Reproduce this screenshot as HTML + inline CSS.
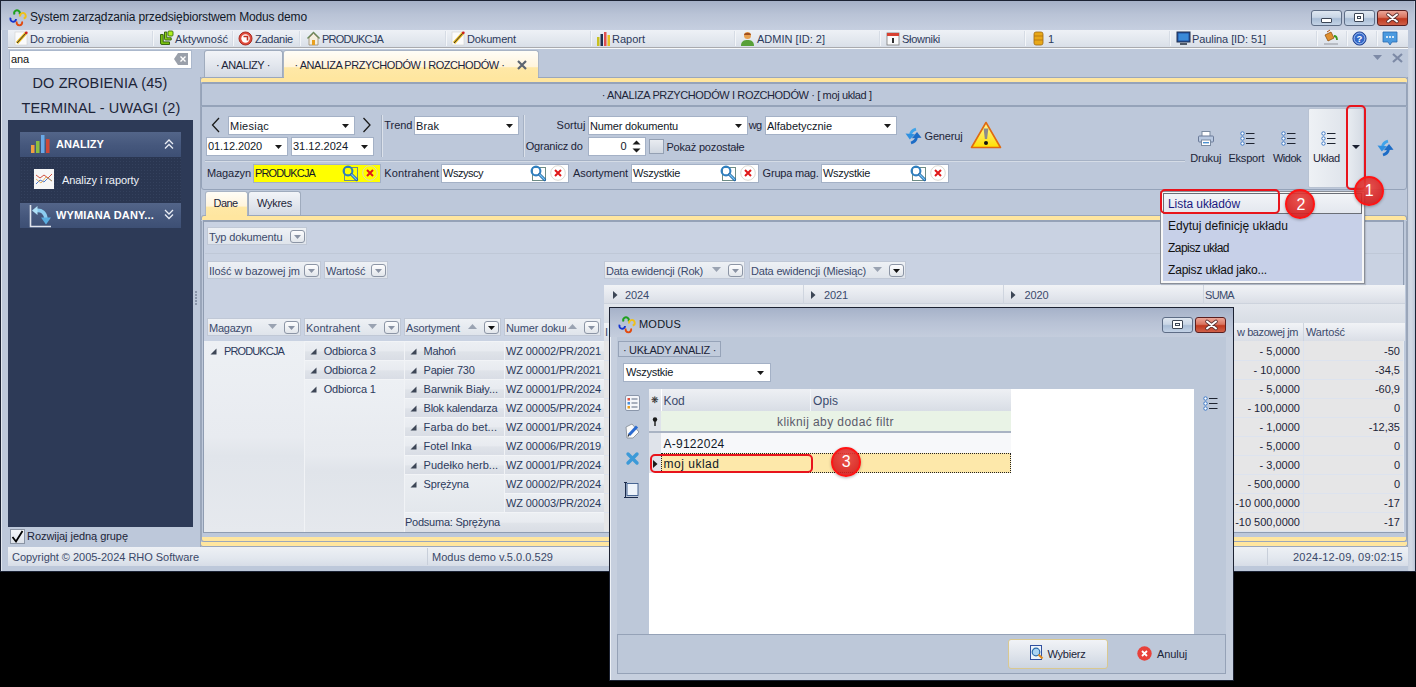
<!DOCTYPE html>
<html><head><meta charset="utf-8">
<style>
*{margin:0;padding:0;box-sizing:border-box}
html,body{width:1416px;height:687px;overflow:hidden;background:#000;font-family:"Liberation Sans",sans-serif;font-size:11px;color:#1f2b48}
.a{position:absolute}
.t{position:absolute;white-space:nowrap}
svg{position:absolute;overflow:visible}
</style></head><body>

<div class="a" style="left:0px;top:0px;width:1416px;height:572px;background:#bdc8da;border:1px solid #1b2233;"></div>
<div class="a" style="left:1px;top:1px;width:1413px;height:570px;border-left:1px solid #e2e7ef;border-top:1px solid #dfe5ee;"></div>
<div class="a" style="left:1px;top:1px;width:1413px;height:29px;background:linear-gradient(#a5b1c8,#b9c3d6 45%,#c6cfe0);"></div>
<svg style="left:6px;top:6px" width="24" height="24" viewBox="0 0 24 24"><path d="M8.6 8.6A2.8 2.8 0 1 1 13.4 8.6" stroke="#1ea01e" stroke-width="1.9" fill="none"/><path d="M14.2 10.5A2.8 2.8 0 1 1 17.7 12.5" stroke="#f0c018" stroke-width="1.9" fill="none"/><path d="M4.7 11.7A2.8 2.8 0 1 0 10 13" stroke="#1434d0" stroke-width="1.9" fill="none"/><path d="M10.8 15.5A2.8 2.8 0 1 0 16 15.5" stroke="#e24a10" stroke-width="1.9" fill="none"/></svg>
<span class="t" style="left:30px;top:10.84px;font-size:12px;line-height:12px;letter-spacing:-0.152px;color:#111827;">System zarządzania przedsiębiorstwem Modus demo</span>
<div class="a" style="left:1311px;top:10px;width:31px;height:16px;background:linear-gradient(#dfe7f1,#c9d6e6 45%,#a9bdd6 55%,#c4d3e6);border:1px solid #5e6d86;border-radius:3px;"></div>
<div class="a" style="left:1344px;top:10px;width:31px;height:16px;background:linear-gradient(#dfe7f1,#c9d6e6 45%,#a9bdd6 55%,#c4d3e6);border:1px solid #5e6d86;border-radius:3px;"></div>
<div class="a" style="left:1377px;top:10px;width:31px;height:16px;background:linear-gradient(#eba597,#d9745f 45%,#c0391f 55%,#d06048);border:1px solid #5a1f1f;border-radius:3px;"></div>
<div class="a" style="left:1321px;top:18px;width:11px;height:5px;background:#fff;border:1px solid #3c4656;border-radius:1px;"></div>
<div class="a" style="left:1354px;top:13px;width:10px;height:9px;background:#fff;border:1px solid #3c4656;border-radius:1px;"><div class="a" style="left:2px;top:2px;width:4px;height:3px;border:1px solid #3c4656"></div></div>
<svg style="left:1386px;top:13px" width="13" height="10" viewBox="0 0 13 10"><path d="M2 1.5L11 8.5M11 1.5L2 8.5" stroke="#5a3030" stroke-width="3.6" stroke-linecap="round"/><path d="M2 1.5L11 8.5M11 1.5L2 8.5" stroke="#fff" stroke-width="2" stroke-linecap="round"/></svg>
<div class="a" style="left:8px;top:30px;width:1400px;height:17px;background:linear-gradient(#eef1f6,#e2e7ee 60%,#d9dfe8);"></div>
<div class="a" style="left:8px;top:47px;width:1400px;height:1px;background:#a9aaae;"></div>
<div class="a" style="left:8px;top:48px;width:1400px;height:1px;background:#f7f9fb;"></div>
<div class="a" style="left:152px;top:31px;width:2px;height:15px;border-left:1px solid #d6dce5;border-right:1px solid #f4f6f9;"></div>
<div class="a" style="left:232px;top:31px;width:2px;height:15px;border-left:1px solid #d6dce5;border-right:1px solid #f4f6f9;"></div>
<div class="a" style="left:299px;top:31px;width:2px;height:15px;border-left:1px solid #d6dce5;border-right:1px solid #f4f6f9;"></div>
<div class="a" style="left:445px;top:31px;width:2px;height:15px;border-left:1px solid #d6dce5;border-right:1px solid #f4f6f9;"></div>
<div class="a" style="left:590px;top:31px;width:2px;height:15px;border-left:1px solid #d6dce5;border-right:1px solid #f4f6f9;"></div>
<div class="a" style="left:734px;top:31px;width:2px;height:15px;border-left:1px solid #d6dce5;border-right:1px solid #f4f6f9;"></div>
<div class="a" style="left:879px;top:31px;width:2px;height:15px;border-left:1px solid #d6dce5;border-right:1px solid #f4f6f9;"></div>
<div class="a" style="left:1024px;top:31px;width:2px;height:15px;border-left:1px solid #d6dce5;border-right:1px solid #f4f6f9;"></div>
<div class="a" style="left:1169px;top:31px;width:2px;height:15px;border-left:1px solid #d6dce5;border-right:1px solid #f4f6f9;"></div>
<div class="a" style="left:1316px;top:31px;width:2px;height:15px;border-left:1px solid #d6dce5;border-right:1px solid #f4f6f9;"></div>
<div class="a" style="left:1346px;top:31px;width:2px;height:15px;border-left:1px solid #d6dce5;border-right:1px solid #f4f6f9;"></div>
<div class="a" style="left:1376px;top:31px;width:2px;height:15px;border-left:1px solid #d6dce5;border-right:1px solid #f4f6f9;"></div>
<span class="t" style="left:30px;top:33.69px;font-size:11px;line-height:11px;letter-spacing:-0.230px;color:#2c3a5c;">Do zrobienia</span>
<span class="t" style="left:175px;top:33.69px;font-size:11px;line-height:11px;letter-spacing:0.047px;color:#2c3a5c;">Aktywność</span>
<span class="t" style="left:255px;top:33.69px;font-size:11px;line-height:11px;letter-spacing:-0.252px;color:#2c3a5c;">Zadanie</span>
<span class="t" style="left:322px;top:33.69px;font-size:11px;line-height:11px;letter-spacing:-0.760px;color:#2c3a5c;">PRODUKCJA</span>
<span class="t" style="left:467px;top:33.69px;font-size:11px;line-height:11px;letter-spacing:-0.143px;color:#2c3a5c;">Dokument</span>
<span class="t" style="left:612px;top:33.69px;font-size:11px;line-height:11px;letter-spacing:-0.005px;color:#2c3a5c;">Raport</span>
<span class="t" style="left:757px;top:33.69px;font-size:11px;line-height:11px;letter-spacing:0.012px;color:#2c3a5c;">ADMIN [ID: 2]</span>
<span class="t" style="left:902px;top:33.69px;font-size:11px;line-height:11px;letter-spacing:-0.295px;color:#2c3a5c;">Słowniki</span>
<span class="t" style="left:1048px;top:33.69px;font-size:11px;line-height:11px;letter-spacing:-1.125px;color:#2c3a5c;">1</span>
<span class="t" style="left:1192px;top:33.69px;font-size:11px;line-height:11px;letter-spacing:-0.076px;color:#2c3a5c;">Paulina [ID: 51]</span>
<svg style="left:14px;top:31px" width="15" height="15" viewBox="0 0 15 15"><rect x="1" y="1" width="12" height="13" fill="#fbfbfb" stroke="#d0d0d0" stroke-width="0.6"/><path d="M3 12L12 2" stroke="#e8b820" stroke-width="3"/><path d="M3 12L12 2" stroke="#303030" stroke-width="1"/><circle cx="12.3" cy="1.8" r="1.4" fill="#d02020"/></svg>
<svg style="left:158px;top:30px" width="16" height="16" viewBox="0 0 16 16"><path d="M2.5 4.5v8.5a1.5 1.5 0 0 0 1.5 1.5h7.5v-2.6H5.2V4.5z" fill="#78c010" stroke="#2f5a08" stroke-width="0.9"/><path d="M6.5 2v6.8a1.2 1.2 0 0 0 1.2 1.2h5.5V7.8H8.8V2z" fill="#8ad018" stroke="#2f5a08" stroke-width="0.9"/><rect x="10" y="1" width="5" height="5" rx="1" fill="#b0f020" stroke="#3a7010" stroke-width="0.9"/></svg>
<svg style="left:238px;top:31px" width="15" height="15" viewBox="0 0 15 15"><circle cx="7.5" cy="7.5" r="6.5" fill="#e04a3a" stroke="#a82a20"/><circle cx="7.5" cy="7.5" r="4.2" fill="#fff"/><path d="M5.5 5.5h4v4" stroke="#c03020" stroke-width="1.6" fill="none"/></svg>
<svg style="left:306px;top:31px" width="15" height="15" viewBox="0 0 15 15"><path d="M1.5 7.5L7.5 1.5L13.5 7.5" stroke="#6a8a5a" stroke-width="1.5" fill="none"/><path d="M3 7v7h9V7L7.5 2.5z" fill="#f4efe0" stroke="#9a8a70" stroke-width="0.8"/><rect x="6" y="9" width="3" height="5" fill="#e8a020"/></svg>
<svg style="left:451px;top:31px" width="15" height="15" viewBox="0 0 15 15"><rect x="1" y="1" width="12" height="13" fill="#fbfbfb" stroke="#d0d0d0" stroke-width="0.6"/><path d="M3 12L12 2" stroke="#e8b820" stroke-width="3"/><path d="M3 12L12 2" stroke="#303030" stroke-width="1"/><circle cx="12.3" cy="1.8" r="1.4" fill="#d02020"/></svg>
<svg style="left:596px;top:31px" width="15" height="15" viewBox="0 0 15 15"><rect x="1" y="6" width="2.5" height="9" fill="#c8c020"/><rect x="4.5" y="3" width="2.5" height="12" fill="#203050"/><rect x="8" y="1" width="2.5" height="14" fill="#e05050"/><rect x="11.5" y="4" width="2.5" height="11" fill="#e8c020"/></svg>
<svg style="left:740px;top:31px" width="15" height="15" viewBox="0 0 15 15"><circle cx="7.5" cy="4.5" r="3.5" fill="#e8a050"/><path d="M4 4c0-3 7-3 7 0" fill="#a05020"/><path d="M1 15c0-5 3-6 6.5-6s6.5 1 6.5 6z" fill="#58a038"/></svg>
<svg style="left:886px;top:31px" width="14" height="15" viewBox="0 0 14 15"><rect x="1" y="2" width="12" height="12" fill="#fafafa" stroke="#7a7a7a" stroke-width="0.8"/><rect x="1" y="2" width="12" height="3" fill="#d84030"/><rect x="6" y="7" width="2" height="5" fill="#303030"/></svg>
<svg style="left:1033px;top:31px" width="11" height="15" viewBox="0 0 11 15"><rect x="1" y="1" width="9" height="13" rx="2" fill="#e8a818" stroke="#a06810" stroke-width="0.8"/><path d="M1 5h9M1 9h9" stroke="#b07010" stroke-width="0.8"/></svg>
<svg style="left:1176px;top:31px" width="15" height="15" viewBox="0 0 15 15"><rect x="1" y="1" width="13" height="10" fill="#2050a0" stroke="#203050"/><rect x="2.5" y="2.5" width="10" height="7" fill="#3a8ad8"/><rect x="4" y="12" width="7" height="2" fill="#505a68"/></svg>
<svg style="left:1322px;top:30px" width="17" height="16" viewBox="0 0 17 16"><path d="M3 5l6-3 3 6-6 3z" fill="#e09030" stroke="#905010" stroke-width="0.8"/><path d="M5 2L8 0" stroke="#b05010" stroke-width="1"/><path d="M12 6c2 0 3 2 3 4" stroke="#3a9a20" stroke-width="1.8" fill="none"/><rect x="2" y="13" width="14" height="2" fill="#b8bcc4"/></svg>
<svg style="left:1352px;top:31px" width="15" height="15" viewBox="0 0 15 15"><circle cx="7.5" cy="7.5" r="6.6" fill="#3468c8" stroke="#1c3c8a" stroke-width="0.9"/><circle cx="7.5" cy="7.5" r="5.4" fill="none" stroke="#c8dcff" stroke-width="0.7"/><text x="7.5" y="11" font-size="9.5" font-weight="bold" fill="#fff" text-anchor="middle" font-family="Liberation Sans">?</text></svg>
<svg style="left:1382px;top:31px" width="16" height="15" viewBox="0 0 16 15"><path d="M1 1h14v10H10l-2 3-2-3H1z" fill="#4a9ae0" stroke="#2a6ab0" stroke-width="0.8"/><circle cx="5" cy="6" r="1" fill="#fff"/><circle cx="8" cy="6" r="1" fill="#fff"/><circle cx="11" cy="6" r="1" fill="#fff"/></svg>
<div class="a" style="left:9px;top:50px;width:183px;height:19px;background:#fff;border:1px solid #abb8cc;"></div>
<span class="t" style="left:11px;top:53.69px;font-size:11px;line-height:11px;letter-spacing:-0.120px;color:#111;">ana</span>
<svg style="left:174px;top:53px" width="15" height="12" viewBox="0 0 15 12"><path d="M4 0h10v12H4L0 6z" fill="#9aa0aa"/><path d="M6.5 3.5l5 5M11.5 3.5l-5 5" stroke="#fff" stroke-width="1.4"/></svg>
<span class="t" style="left:32.50px;top:76.43px;font-size:14.5px;line-height:14.5px;letter-spacing:0.120px;color:#1c2438;">DO ZROBIENIA (45)</span>
<span class="t" style="left:21.50px;top:101.03px;font-size:14.5px;line-height:14.5px;letter-spacing:0.149px;color:#1c2438;">TERMINAL - UWAGI (2)</span>
<div class="a" style="left:8px;top:120px;width:185px;height:407px;background:#2d3a57;"></div>
<div class="a" style="left:20px;top:132px;width:161px;height:25px;background:linear-gradient(#536589,#45577c 55%,#3d4f74);"></div>
<svg style="left:31px;top:135px" width="20" height="18" viewBox="0 0 20 18"><rect x="0" y="10" width="3.5" height="8" fill="#f0a040"/><rect x="5" y="6" width="3.5" height="12" fill="#8ac040"/><rect x="10" y="0" width="3.5" height="18" fill="#6aaae8"/><rect x="15" y="4" width="3.5" height="14" fill="#d04838"/></svg>
<span class="t" style="left:56px;top:139.39px;font-size:11px;line-height:11px;font-weight:bold;letter-spacing:0.047px;color:#fff;">ANALIZY</span>
<svg style="left:164px;top:139px" width="10" height="10" viewBox="0 0 10 10"><path d="M1 5l4-4 4 4M1 9.5l4-4 4 4" stroke="#e8ecf4" stroke-width="1.3" fill="none"/></svg>
<div class="a" style="left:20px;top:157px;width:161px;height:46px;background-color:#2a3651;background-image:radial-gradient(#34415d 0.8px,transparent 0.9px);background-size:3px 3px;"></div>
<svg style="left:34px;top:169px" width="20" height="20" viewBox="0 0 20 20"><rect x="0" y="0" width="20" height="20" fill="#f6f6f6"/><path d="M2 6l4 3 4-3 4 3 4-4" stroke="#d05040" stroke-width="1" fill="none"/><path d="M2 15l4-4 4 2 4-4 4 3" stroke="#4a7ad0" stroke-width="1" fill="none"/><path d="M2 10l5 4 5-6 6 4" stroke="#e0a040" stroke-width="0.8" fill="none"/></svg>
<span class="t" style="left:62px;top:174.69px;font-size:11px;line-height:11px;letter-spacing:-0.074px;color:#eef2f8;">Analizy i raporty</span>
<div class="a" style="left:20px;top:203px;width:161px;height:25px;background:linear-gradient(#536589,#45577c 55%,#3d4f74);"></div>
<svg style="left:29px;top:205px" width="23" height="23" viewBox="0 0 23 23"><path d="M1.5 0v21.5H22" stroke="#e0e4ec" stroke-width="1.6" fill="none"/><path d="M7 5.5Q16 4.5 17 14" stroke="#8ccdf0" stroke-width="3.6" fill="none"/><path d="M3 5.5L8.5 1L8.5 10z" fill="#b0e0f6"/><path d="M12 12.5L22 12.5L17 19.5z" fill="#5aaee0"/></svg>
<span class="t" style="left:56px;top:210.49px;font-size:11px;line-height:11px;font-weight:bold;letter-spacing:0.164px;color:#fff;">WYMIANA DANY...</span>
<svg style="left:164px;top:209px" width="10" height="10" viewBox="0 0 10 10"><path d="M1 1l4 4 4-4M1 5.5l4 4 4-4" stroke="#e8ecf4" stroke-width="1.3" fill="none"/></svg>
<div class="a" style="left:10px;top:529px;width:15px;height:15px;background:linear-gradient(#f4f6f9,#dde2ea);border:1px solid #8a94a4;"></div>
<svg style="left:11px;top:530px" width="13" height="13" viewBox="0 0 13 13"><path d="M1.5 7l3.5 4.5L11.5 1" stroke="#000" stroke-width="1.8" fill="none"/></svg>
<span class="t" style="left:27px;top:531.19px;font-size:11px;line-height:11px;letter-spacing:-0.056px;color:#1c2438;">Rozwijaj jedną grupę</span>
<div class="a" style="left:8px;top:547px;width:1400px;height:19px;background:linear-gradient(#eef1f5,#e2e7ee 60%,#d7dde7);"></div>
<div class="a" style="left:427px;top:548px;width:1px;height:17px;background:#c8cfda;"></div>
<span class="t" style="left:12px;top:551.69px;font-size:11px;line-height:11px;letter-spacing:-0.026px;color:#3a4868;">Copyright © 2005-2024 RHO Software</span>
<span class="t" style="left:432px;top:551.69px;font-size:11px;line-height:11px;letter-spacing:0.033px;color:#3a4868;">Modus demo v.5.0.0.529</span>
<div class="a" style="left:1267px;top:548px;width:1px;height:17px;background:#c8cfda;"></div>
<span class="t" style="left:1293.00px;top:551.69px;font-size:11px;line-height:11px;letter-spacing:0.228px;color:#3a4868;">2024-12-09,  09:02:15</span>
<div class="a" style="left:200px;top:77px;width:1px;height:470px;background:#9aa6ba;"></div>
<div class="a" style="left:1407px;top:77px;width:1px;height:470px;background:#9aa6ba;"></div>
<div class="a" style="left:195px;top:291px;width:2px;height:2px;background:#8a95aa;"></div>
<div class="a" style="left:195px;top:294px;width:2px;height:2px;background:#8a95aa;"></div>
<div class="a" style="left:195px;top:297px;width:2px;height:2px;background:#8a95aa;"></div>
<div class="a" style="left:195px;top:300px;width:2px;height:2px;background:#8a95aa;"></div>
<div class="a" style="left:195px;top:303px;width:2px;height:2px;background:#8a95aa;"></div>
<div class="a" style="left:204px;top:50px;width:79px;height:28px;background:linear-gradient(#f2f4f8,#e3e7ee 50%,#d2d8e2);border:1px solid #9fabbd;border-bottom:none;border-radius:3px 3px 0 0;"></div>
<div class="a" style="left:283px;top:50px;width:256px;height:28px;background:linear-gradient(#fffdf7,#fff4dc 58%,#ffe8a6 62%,#fee6a0);border:1px solid #a9b4c5;border-bottom:none;border-radius:3px 3px 0 0;"></div>
<span class="t" style="left:216px;top:59.99px;font-size:11px;line-height:11px;letter-spacing:-0.408px;color:#1c2438;">· ANALIZY ·</span>
<span class="t" style="left:294.5px;top:59.99px;font-size:11px;line-height:11px;letter-spacing:-0.456px;color:#1c2438;">· ANALIZA PRZYCHODÓW I ROZCHODÓW ·</span>
<svg style="left:517px;top:60px" width="10" height="10" viewBox="0 0 10 10"><path d="M1 1l8 8M9 1l-8 8" stroke="#5c6470" stroke-width="2.2"/></svg>
<svg style="left:1373px;top:55px" width="10" height="6" viewBox="0 0 10 6"><path d="M0 0h9l-4.5 5z" fill="#7d8aa6"/></svg>
<svg style="left:1392px;top:53px" width="11" height="10" viewBox="0 0 11 10"><path d="M1 1l9 8M10 1l-9 8" stroke="#7d8aa6" stroke-width="2.2"/></svg>
<div class="a" style="left:200px;top:77px;width:1208px;height:5px;background:#ffe69f;border:1px solid #9aa7bc;border-bottom:none;border-radius:3px 3px 0 0;"></div>
<div class="a" style="left:284px;top:77px;width:254px;height:1px;background:#fee6a0;"></div>
<div class="a" style="left:201px;top:82px;width:1206px;height:24px;background:#bdc8da;border:1px solid #95a3b9;border-top-width:2px;border-radius:2px 2px 0 0;"></div>
<span class="t" style="left:601.7px;top:89.69px;font-size:11px;line-height:11px;letter-spacing:-0.372px;color:#1c2438;">· ANALIZA PRZYCHODÓW I ROZCHODÓW · [ moj uklad ]</span>
<div class="a" style="left:201px;top:106px;width:1206px;height:84px;background:#bdc8da;border:1px solid #95a3b9;border-radius:0 0 3px 3px;"></div>
<svg style="left:211px;top:117px" width="10" height="16" viewBox="0 0 10 16"><path d="M8 1L1.5 8L8 15" stroke="#1a1a1a" stroke-width="1.3" fill="none"/></svg>
<svg style="left:362px;top:117px" width="10" height="16" viewBox="0 0 10 16"><path d="M1.5 1L8 8L1.5 15" stroke="#1a1a1a" stroke-width="1.3" fill="none"/></svg>
<div class="a" style="left:228px;top:116px;width:127px;height:19px;background:#fff;border:1px solid #a4b1c6;"></div>
<span class="t" style="left:230px;top:120.69px;font-size:11px;line-height:11px;letter-spacing:0.243px;color:#111827;">Miesiąc</span>
<svg style="left:342px;top:124px" width="7" height="4" viewBox="0 0 7 4"><path d="M0 0h7l-3.5 4z" fill="#1a1a1a"/></svg>
<div class="a" style="left:206px;top:137px;width:82px;height:19px;background:#fff;border:1px solid #a4b1c6;"></div>
<span class="t" style="left:208px;top:140.69px;font-size:11px;line-height:11px;letter-spacing:-0.106px;color:#111827;">01.12.2020</span>
<svg style="left:275px;top:145px" width="7" height="4" viewBox="0 0 7 4"><path d="M0 0h7l-3.5 4z" fill="#1a1a1a"/></svg>
<div class="a" style="left:291px;top:137px;width:83px;height:19px;background:#fff;border:1px solid #a4b1c6;"></div>
<span class="t" style="left:293px;top:140.69px;font-size:11px;line-height:11px;letter-spacing:-0.006px;color:#111827;">31.12.2024</span>
<svg style="left:361px;top:145px" width="7" height="4" viewBox="0 0 7 4"><path d="M0 0h7l-3.5 4z" fill="#1a1a1a"/></svg>
<div class="a" style="left:381px;top:115px;width:1px;height:42px;background:#a6b2c5;border-right:1px solid #dbe1ea;width:2px;"></div>
<span class="t" style="left:384.3px;top:119.69px;font-size:11px;line-height:11px;letter-spacing:-0.066px;color:#1c2438;">Trend</span>
<div class="a" style="left:414px;top:116px;width:105px;height:19px;background:#fff;border:1px solid #a4b1c6;"></div>
<span class="t" style="left:416px;top:120.69px;font-size:11px;line-height:11px;letter-spacing:0.094px;color:#111827;">Brak</span>
<svg style="left:506px;top:124px" width="7" height="4" viewBox="0 0 7 4"><path d="M0 0h7l-3.5 4z" fill="#1a1a1a"/></svg>
<div class="a" style="left:523px;top:115px;width:1px;height:42px;background:#a6b2c5;border-right:1px solid #dbe1ea;width:2px;"></div>
<span class="t" style="left:556.5px;top:119.69px;font-size:11px;line-height:11px;letter-spacing:0.042px;color:#1c2438;">Sortuj</span>
<div class="a" style="left:588px;top:116px;width:160px;height:19px;background:#fff;border:1px solid #a4b1c6;"></div>
<span class="t" style="left:590px;top:120.69px;font-size:11px;line-height:11px;letter-spacing:-0.167px;color:#111827;">Numer dokumentu</span>
<svg style="left:735px;top:124px" width="7" height="4" viewBox="0 0 7 4"><path d="M0 0h7l-3.5 4z" fill="#1a1a1a"/></svg>
<span class="t" style="left:748.7px;top:119.69px;font-size:11px;line-height:11px;letter-spacing:-0.531px;color:#1c2438;">wg</span>
<div class="a" style="left:765px;top:116px;width:132px;height:19px;background:#fff;border:1px solid #a4b1c6;"></div>
<span class="t" style="left:767px;top:120.69px;font-size:11px;line-height:11px;letter-spacing:-0.034px;color:#111827;">Alfabetycznie</span>
<svg style="left:884px;top:124px" width="7" height="4" viewBox="0 0 7 4"><path d="M0 0h7l-3.5 4z" fill="#1a1a1a"/></svg>
<span class="t" style="left:525.7px;top:141.49px;font-size:11px;line-height:11px;letter-spacing:-0.210px;color:#1c2438;">Ogranicz do</span>
<div class="a" style="left:588px;top:137px;width:58px;height:19px;background:#fff;border:1px solid #a4b1c6;"></div>
<span class="t" style="left:620.40px;top:141.19px;font-size:11px;line-height:11px;letter-spacing:-0.125px;color:#111827;">0</span>
<svg style="left:632px;top:139px" width="9" height="15" viewBox="0 0 9 15"><path d="M0.5 5.5h8L4.5 1.5z" fill="#1a1a1a"/><path d="M0.5 9.5h8L4.5 13.5z" fill="#1a1a1a"/></svg>
<div class="a" style="left:649px;top:139px;width:15px;height:15px;background:linear-gradient(#e9ecf1,#cfd6e0);border:1px solid #94a0b3;"></div>
<span class="t" style="left:666.4px;top:142.19px;font-size:11px;line-height:11px;letter-spacing:-0.181px;color:#1c2438;">Pokaż pozostałe</span>
<svg style="left:905px;top:128px" width="17" height="16" viewBox="0 0 17 16"><path d="M11 1.2Q6 2.5 5.5 7" stroke="#40a4ea" stroke-width="2.8" fill="none"/><path d="M0.5 5.5L10 6.2L4.8 11.5z" fill="#2f90e0"/><path d="M6 15Q11 13.5 11.5 9" stroke="#1c6cc6" stroke-width="2.8" fill="none"/><path d="M6.8 10.2L16.5 9.8L12 4z" fill="#1c6cc6"/></svg>
<span class="t" style="left:924.5px;top:131.29px;font-size:11px;line-height:11px;letter-spacing:-0.163px;color:#1c2438;">Generuj</span>
<svg style="left:970px;top:121px" width="32" height="28" viewBox="0 0 32 28"><defs><linearGradient id="wg" x1="0" y1="0" x2="0" y2="1"><stop offset="0" stop-color="#fff8a0"/><stop offset="1" stop-color="#ffe000"/></linearGradient></defs><path d="M16 1.5L30.5 26.5H1.5z" fill="url(#wg)" stroke="#e06a10" stroke-width="1.6" stroke-linejoin="round"/><path d="M13.6 7.5h4.8l-1.3 10.5h-2.2z" fill="#8c8c8c"/><circle cx="16" cy="22" r="2" fill="#111"/></svg>
<div class="a" style="left:205px;top:160px;width:980px;height:1px;background:#a6b2c5;border-bottom:1px solid #d5dce6;height:2px;"></div>
<span class="t" style="left:207px;top:168.39px;font-size:11px;line-height:11px;letter-spacing:-0.092px;color:#1c2438;">Magazyn</span>
<div class="a" style="left:253px;top:164px;width:128px;height:19px;background:#ffff00;border:1px solid #a4b1c6;"></div>
<span class="t" style="left:255px;top:167.69px;font-size:11px;line-height:11px;letter-spacing:-0.872px;color:#111827;">PRODUKCJA</span>
<svg style="left:342px;top:165px" width="17" height="17" viewBox="0 0 17 17"><rect x="2.5" y="2.5" width="13" height="13" fill="none" stroke="#6e8c86" stroke-width="1"/><circle cx="6" cy="6" r="4.4" fill="none" stroke="#2f7fc0" stroke-width="2.1"/><path d="M9.5 9.5L14.6 14.6" stroke="#2a6aa8" stroke-width="3" stroke-linecap="round"/><path d="M9.8 9.8L14.4 14.4" stroke="#74c8f6" stroke-width="1.3" stroke-linecap="round"/></svg>
<svg style="left:362px;top:165px" width="16" height="16" viewBox="0 0 16 16"><circle cx="8" cy="8" r="7.3" fill="none" stroke="#d8d4cc" stroke-width="0.9"/><path d="M5 5l6 6M11 5l-6 6" stroke="#e01818" stroke-width="2"/></svg>
<span class="t" style="left:384.3px;top:168.39px;font-size:11px;line-height:11px;letter-spacing:0.117px;color:#1c2438;">Kontrahent</span>
<div class="a" style="left:441px;top:164px;width:128px;height:19px;background:#fff;border:1px solid #a4b1c6;"></div>
<span class="t" style="left:443px;top:167.69px;font-size:11px;line-height:11px;letter-spacing:-0.484px;color:#111827;">Wszyscy</span>
<svg style="left:530px;top:165px" width="17" height="17" viewBox="0 0 17 17"><rect x="2.5" y="2.5" width="13" height="13" fill="none" stroke="#6e8c86" stroke-width="1"/><circle cx="6" cy="6" r="4.4" fill="none" stroke="#2f7fc0" stroke-width="2.1"/><path d="M9.5 9.5L14.6 14.6" stroke="#2a6aa8" stroke-width="3" stroke-linecap="round"/><path d="M9.8 9.8L14.4 14.4" stroke="#74c8f6" stroke-width="1.3" stroke-linecap="round"/></svg>
<svg style="left:549.8px;top:165px" width="16" height="16" viewBox="0 0 16 16"><circle cx="8" cy="8" r="7.3" fill="none" stroke="#d8d4cc" stroke-width="0.9"/><path d="M5 5l6 6M11 5l-6 6" stroke="#e01818" stroke-width="2"/></svg>
<span class="t" style="left:573px;top:168.39px;font-size:11px;line-height:11px;letter-spacing:-0.064px;color:#1c2438;">Asortyment</span>
<div class="a" style="left:631px;top:164px;width:128px;height:19px;background:#fff;border:1px solid #a4b1c6;"></div>
<span class="t" style="left:633px;top:167.69px;font-size:11px;line-height:11px;letter-spacing:-0.278px;color:#111827;">Wszystkie</span>
<svg style="left:720px;top:165px" width="17" height="17" viewBox="0 0 17 17"><rect x="2.5" y="2.5" width="13" height="13" fill="none" stroke="#6e8c86" stroke-width="1"/><circle cx="6" cy="6" r="4.4" fill="none" stroke="#2f7fc0" stroke-width="2.1"/><path d="M9.5 9.5L14.6 14.6" stroke="#2a6aa8" stroke-width="3" stroke-linecap="round"/><path d="M9.8 9.8L14.4 14.4" stroke="#74c8f6" stroke-width="1.3" stroke-linecap="round"/></svg>
<svg style="left:739.5px;top:165px" width="16" height="16" viewBox="0 0 16 16"><circle cx="8" cy="8" r="7.3" fill="none" stroke="#d8d4cc" stroke-width="0.9"/><path d="M5 5l6 6M11 5l-6 6" stroke="#e01818" stroke-width="2"/></svg>
<span class="t" style="left:762.6px;top:168.39px;font-size:11px;line-height:11px;letter-spacing:-0.209px;color:#1c2438;">Grupa mag.</span>
<div class="a" style="left:821px;top:164px;width:128px;height:19px;background:#fff;border:1px solid #a4b1c6;"></div>
<span class="t" style="left:823px;top:167.69px;font-size:11px;line-height:11px;letter-spacing:-0.278px;color:#111827;">Wszystkie</span>
<svg style="left:910px;top:165px" width="17" height="17" viewBox="0 0 17 17"><rect x="2.5" y="2.5" width="13" height="13" fill="none" stroke="#6e8c86" stroke-width="1"/><circle cx="6" cy="6" r="4.4" fill="none" stroke="#2f7fc0" stroke-width="2.1"/><path d="M9.5 9.5L14.6 14.6" stroke="#2a6aa8" stroke-width="3" stroke-linecap="round"/><path d="M9.8 9.8L14.4 14.4" stroke="#74c8f6" stroke-width="1.3" stroke-linecap="round"/></svg>
<svg style="left:930px;top:165px" width="16" height="16" viewBox="0 0 16 16"><circle cx="8" cy="8" r="7.3" fill="none" stroke="#d8d4cc" stroke-width="0.9"/><path d="M5 5l6 6M11 5l-6 6" stroke="#e01818" stroke-width="2"/></svg>
<svg style="left:1198px;top:131px" width="16" height="15" viewBox="0 0 16 15"><rect x="4" y="0.5" width="8" height="5" fill="#fff" stroke="#7a8aa0"/><rect x="0.5" y="5" width="15" height="6" rx="1" fill="#b8c8e0" stroke="#6a7a98"/><rect x="3.5" y="9" width="9" height="5.5" fill="#fff" stroke="#7a8aa0"/><rect x="5" y="11" width="6" height="1.4" fill="#4a90d0"/></svg>
<svg style="left:1240px;top:131px" width="15" height="14" viewBox="0 0 15 14"><circle cx="2.5" cy="2.5" r="1.7" fill="#fff" stroke="#3a78c8" stroke-width="1"/><circle cx="2.5" cy="7.5" r="1.7" fill="#fff" stroke="#3a78c8" stroke-width="1"/><circle cx="2.5" cy="12.5" r="1.7" fill="#fff" stroke="#3a78c8" stroke-width="1"/><path d="M6 2.5h8.5M6 7.5h8.5M6 12.5h8.5" stroke="#1e2430" stroke-width="1"/></svg>
<svg style="left:1281px;top:131px" width="15" height="14" viewBox="0 0 15 14"><circle cx="2.5" cy="2.5" r="1.7" fill="#fff" stroke="#3a78c8" stroke-width="1"/><circle cx="2.5" cy="7.5" r="1.7" fill="#fff" stroke="#3a78c8" stroke-width="1"/><circle cx="2.5" cy="12.5" r="1.7" fill="#fff" stroke="#3a78c8" stroke-width="1"/><path d="M6 2.5h8.5M6 7.5h8.5M6 12.5h8.5" stroke="#1e2430" stroke-width="1"/></svg>
<span class="t" style="left:1190.3px;top:153.49px;font-size:11px;line-height:11px;letter-spacing:-0.133px;color:#1c2438;">Drukuj</span>
<span class="t" style="left:1228.4px;top:153.49px;font-size:11px;line-height:11px;letter-spacing:-0.185px;color:#1c2438;">Eksport</span>
<span class="t" style="left:1273px;top:153.49px;font-size:11px;line-height:11px;letter-spacing:-0.512px;color:#1c2438;">Widok</span>
<div class="a" style="left:1308px;top:108px;width:39px;height:80px;background:linear-gradient(90deg,#eef1f5,#dfe4eb);border:1px solid #b8c2d2;border-radius:2px;"></div>
<div class="a" style="left:1347px;top:108px;width:17px;height:80px;background:linear-gradient(90deg,#e8ecf1,#d5dbe4);border:1px solid #b8c2d2;border-radius:2px;"></div>
<svg style="left:1321px;top:131px" width="15" height="14" viewBox="0 0 15 14"><circle cx="2.5" cy="2.5" r="1.7" fill="#fff" stroke="#3a78c8" stroke-width="1"/><circle cx="2.5" cy="7.5" r="1.7" fill="#fff" stroke="#3a78c8" stroke-width="1"/><circle cx="2.5" cy="12.5" r="1.7" fill="#fff" stroke="#3a78c8" stroke-width="1"/><path d="M6 2.5h8.5M6 7.5h8.5M6 12.5h8.5" stroke="#1e2430" stroke-width="1"/></svg>
<span class="t" style="left:1313px;top:153.49px;font-size:11px;line-height:11px;letter-spacing:-0.225px;color:#1c2438;">Układ</span>
<svg style="left:1352px;top:145px" width="9" height="5" viewBox="0 0 9 5"><path d="M0 0h8l-4 4z" fill="#1a2030"/></svg>
<svg style="left:1377px;top:140px" width="17" height="16" viewBox="0 0 17 16"><path d="M11 1.2Q6 2.5 5.5 7" stroke="#40a4ea" stroke-width="2.8" fill="none"/><path d="M0.5 5.5L10 6.2L4.8 11.5z" fill="#2f90e0"/><path d="M6 15Q11 13.5 11.5 9" stroke="#1c6cc6" stroke-width="2.8" fill="none"/><path d="M6.8 10.2L16.5 9.8L12 4z" fill="#1c6cc6"/></svg>
<div class="a" style="left:205px;top:191px;width:43px;height:25px;background:linear-gradient(#fffdf7,#fff4dc 58%,#ffe8a6 64%,#fee6a0);border:1px solid #a9b4c5;border-bottom:none;border-radius:3px 3px 0 0;"></div>
<div class="a" style="left:248px;top:191px;width:53px;height:25px;background:linear-gradient(#f2f4f8,#e3e7ee 50%,#d2d8e2);border:1px solid #9fabbd;border-bottom:none;border-radius:3px 3px 0 0;"></div>
<span class="t" style="left:213.6px;top:198.29px;font-size:11px;line-height:11px;letter-spacing:-0.574px;color:#1c2438;">Dane</span>
<span class="t" style="left:256.9px;top:198.29px;font-size:11px;line-height:11px;letter-spacing:-0.263px;color:#1c2438;">Wykres</span>
<div class="a" style="left:201px;top:215px;width:1206px;height:5px;background:#ffe69f;border:1px solid #9aa7bc;border-bottom:none;border-radius:3px 3px 0 0;"></div>
<div class="a" style="left:201px;top:221px;width:1px;height:317px;background:#9aa6ba;"></div>
<div class="a" style="left:1406px;top:221px;width:1px;height:317px;background:#9aa6ba;"></div>
<div class="a" style="left:206px;top:215px;width:41px;height:1px;background:#fee6a0;"></div>
<div class="a" style="left:203px;top:220px;width:1201px;height:313px;background:#c9d2e2;border:1px solid #8f9cb1;border-top:2px solid #95a2b7;"></div>
<div class="a" style="left:207px;top:227px;width:100px;height:18px;background:linear-gradient(#eef1f5,#dfe4eb);border:1px solid #c0c8d6;"></div>
<span class="t" style="left:209px;top:231.69px;font-size:11px;line-height:11px;letter-spacing:-0.132px;color:#3b4a6c;">Typ dokumentu</span>
<div class="a" style="left:290px;top:230px;width:15px;height:13px;border:1px solid #8c95a5;border-radius:3px;background:linear-gradient(#fdfdfe,#e2e6eb)"></div><svg style="left:294px;top:235px" width="7" height="4" viewBox="0 0 7 4"><path d="M0 0h7l-3.5 4z" fill="#8a93a4"/></svg>
<div class="a" style="left:205px;top:253px;width:1198px;height:1px;background:#bfc8d7;"></div>
<div class="a" style="left:207px;top:261px;width:114px;height:18px;background:linear-gradient(#eef1f5,#dfe4eb);border:1px solid #c0c8d6;"></div>
<span class="t" style="left:209px;top:265.69px;font-size:11px;line-height:11px;letter-spacing:-0.039px;color:#3b4a6c;">Ilość w bazowej jm</span>
<div class="a" style="left:304px;top:264px;width:15px;height:13px;border:1px solid #8c95a5;border-radius:3px;background:linear-gradient(#fdfdfe,#e2e6eb)"></div><svg style="left:308px;top:269px" width="7" height="4" viewBox="0 0 7 4"><path d="M0 0h7l-3.5 4z" fill="#8a93a4"/></svg>
<div class="a" style="left:324px;top:261px;width:64px;height:18px;background:linear-gradient(#eef1f5,#dfe4eb);border:1px solid #c0c8d6;"></div>
<span class="t" style="left:326px;top:265.69px;font-size:11px;line-height:11px;letter-spacing:-0.062px;color:#3b4a6c;">Wartość</span>
<div class="a" style="left:371px;top:264px;width:15px;height:13px;border:1px solid #8c95a5;border-radius:3px;background:linear-gradient(#fdfdfe,#e2e6eb)"></div><svg style="left:375px;top:269px" width="7" height="4" viewBox="0 0 7 4"><path d="M0 0h7l-3.5 4z" fill="#8a93a4"/></svg>
<div class="a" style="left:604px;top:261px;width:141px;height:18px;background:linear-gradient(#eef1f5,#dfe4eb);border:1px solid #c0c8d6;"></div>
<span class="t" style="left:606px;top:265.69px;font-size:11px;line-height:11px;letter-spacing:-0.224px;color:#3b4a6c;">Data ewidencji (Rok)</span>
<svg style="left:712px;top:267px" width="9" height="5" viewBox="0 0 9 5"><path d="M0 0h9L4.5 5z" fill="#9aa3b2"/></svg>
<div class="a" style="left:728px;top:264px;width:15px;height:13px;border:1px solid #8c95a5;border-radius:3px;background:linear-gradient(#fdfdfe,#e2e6eb)"></div><svg style="left:732px;top:269px" width="7" height="4" viewBox="0 0 7 4"><path d="M0 0h7l-3.5 4z" fill="#8a93a4"/></svg>
<div class="a" style="left:749px;top:261px;width:157px;height:18px;background:linear-gradient(#eef1f5,#dfe4eb);border:1px solid #c0c8d6;"></div>
<span class="t" style="left:751px;top:265.69px;font-size:11px;line-height:11px;letter-spacing:-0.176px;color:#3b4a6c;">Data ewidencji (Miesiąc)</span>
<svg style="left:873px;top:267px" width="9" height="5" viewBox="0 0 9 5"><path d="M0 0h9L4.5 5z" fill="#9aa3b2"/></svg>
<div class="a" style="left:889px;top:264px;width:15px;height:13px;border:1px solid #8c95a5;border-radius:3px;background:linear-gradient(#fdfdfe,#e2e6eb)"></div><svg style="left:893px;top:269px" width="7" height="4" viewBox="0 0 7 4"><path d="M0 0h7l-3.5 4z" fill="#111"/></svg>
<div class="a" style="left:207px;top:318px;width:94px;height:18px;background:linear-gradient(#eef1f5,#dfe4eb);border:1px solid #c0c8d6;"></div>
<span class="t" style="left:209px;top:322.69px;font-size:11px;line-height:11px;letter-spacing:-0.234px;color:#3b4a6c;">Magazyn</span>
<svg style="left:268px;top:324px" width="9" height="5" viewBox="0 0 9 5"><path d="M0 0h9L4.5 5z" fill="#9aa3b2"/></svg>
<div class="a" style="left:284px;top:321px;width:15px;height:13px;border:1px solid #8c95a5;border-radius:3px;background:linear-gradient(#fdfdfe,#e2e6eb)"></div><svg style="left:288px;top:326px" width="7" height="4" viewBox="0 0 7 4"><path d="M0 0h7l-3.5 4z" fill="#8a93a4"/></svg>
<div class="a" style="left:304px;top:318px;width:97px;height:18px;background:linear-gradient(#eef1f5,#dfe4eb);border:1px solid #c0c8d6;"></div>
<span class="t" style="left:306px;top:322.69px;font-size:11px;line-height:11px;letter-spacing:0.017px;color:#3b4a6c;">Kontrahent</span>
<svg style="left:368px;top:324px" width="9" height="5" viewBox="0 0 9 5"><path d="M0 0h9L4.5 5z" fill="#9aa3b2"/></svg>
<div class="a" style="left:384px;top:321px;width:15px;height:13px;border:1px solid #8c95a5;border-radius:3px;background:linear-gradient(#fdfdfe,#e2e6eb)"></div><svg style="left:388px;top:326px" width="7" height="4" viewBox="0 0 7 4"><path d="M0 0h7l-3.5 4z" fill="#8a93a4"/></svg>
<div class="a" style="left:404px;top:318px;width:97px;height:18px;background:linear-gradient(#eef1f5,#dfe4eb);border:1px solid #c0c8d6;"></div>
<span class="t" style="left:406px;top:322.69px;font-size:11px;line-height:11px;letter-spacing:-0.164px;color:#3b4a6c;">Asortyment</span>
<svg style="left:468px;top:324px" width="9" height="5" viewBox="0 0 9 5"><path d="M0 5h9L4.5 0z" fill="#9aa3b2"/></svg>
<div class="a" style="left:484px;top:321px;width:15px;height:13px;border:1px solid #8c95a5;border-radius:3px;background:linear-gradient(#fdfdfe,#e2e6eb)"></div><svg style="left:488px;top:326px" width="7" height="4" viewBox="0 0 7 4"><path d="M0 0h7l-3.5 4z" fill="#111"/></svg>
<div class="a" style="left:504px;top:318px;width:97px;height:18px;background:linear-gradient(#eef1f5,#dfe4eb);border:1px solid #c0c8d6;"></div>
<svg style="left:568px;top:324px" width="9" height="5" viewBox="0 0 9 5"><path d="M0 5h9L4.5 0z" fill="#9aa3b2"/></svg>
<div class="a" style="left:584px;top:321px;width:15px;height:13px;border:1px solid #8c95a5;border-radius:3px;background:linear-gradient(#fdfdfe,#e2e6eb)"></div><svg style="left:588px;top:326px" width="7" height="4" viewBox="0 0 7 4"><path d="M0 0h7l-3.5 4z" fill="#8a93a4"/></svg>
<div class="a" style="left:506px;top:319px;width:60px;height:17px;overflow:hidden"><span class="t" style="left:0;top:3.69px;font-size:11px;line-height:11px;letter-spacing:-0.15px;color:#3b4a6c">Numer dokumentu</span></div>
<div class="a" style="left:604px;top:285px;width:801px;height:19px;background:linear-gradient(#f1f3f6,#e6e9ef 50%,#dadee6);border-bottom:1px solid #cdd3dd;"></div>
<div class="a" style="left:803px;top:285px;width:1px;height:19px;background:#cfd5df;"></div>
<div class="a" style="left:1003px;top:285px;width:1px;height:19px;background:#cfd5df;"></div>
<div class="a" style="left:1203px;top:285px;width:1px;height:19px;background:#cfd5df;"></div>
<svg style="left:613px;top:291px" width="5" height="8" viewBox="0 0 5 8"><path d="M0 0v8l4.5-4z" fill="#3d4656"/></svg>
<span class="t" style="left:625px;top:289.69px;font-size:11px;line-height:11px;letter-spacing:-0.121px;color:#3b4a6c;">2024</span>
<svg style="left:811px;top:291px" width="5" height="8" viewBox="0 0 5 8"><path d="M0 0v8l4.5-4z" fill="#3d4656"/></svg>
<span class="t" style="left:824px;top:289.69px;font-size:11px;line-height:11px;letter-spacing:-0.121px;color:#3b4a6c;">2021</span>
<svg style="left:1011px;top:291px" width="5" height="8" viewBox="0 0 5 8"><path d="M0 0v8l4.5-4z" fill="#3d4656"/></svg>
<span class="t" style="left:1024.5px;top:289.69px;font-size:11px;line-height:11px;letter-spacing:-0.121px;color:#3b4a6c;">2020</span>
<span class="t" style="left:1205px;top:289.69px;font-size:11px;line-height:11px;letter-spacing:-0.695px;color:#3b4a6c;">SUMA</span>
<div class="a" style="left:604px;top:304px;width:801px;height:19px;background:linear-gradient(#e3e7ed,#d8dde5);"></div>
<div class="a" style="left:604px;top:323px;width:801px;height:18px;background:linear-gradient(#f1f3f6,#e6e9ef 50%,#dadee6);"></div>
<div class="a" style="left:1303px;top:323px;width:1px;height:18px;background:#cfd5df;"></div>
<span class="t" style="left:1237.00px;top:326.69px;font-size:11px;line-height:11px;letter-spacing:-0.419px;color:#3b4a6c;">w bazowej jm</span>
<span class="t" style="left:1306px;top:326.69px;font-size:11px;line-height:11px;letter-spacing:-0.134px;color:#3b4a6c;">Wartość</span>
<div class="a" style="left:204px;top:341px;width:1200px;height:191px;background:#e6eaf0;"></div>
<div class="a" style="left:204px;top:341px;width:100px;height:191px;background:linear-gradient(#edf0f4,#e8ebf0 50%,#e1e5eb 60%,#e6e9ee);"></div>
<span class="t" style="left:224px;top:345.69px;font-size:11px;line-height:11px;letter-spacing:-0.872px;color:#2c3a5c;">PRODUKCJA</span>
<svg style="left:210px;top:348px" width="7" height="7" viewBox="0 0 7 7"><path d="M6.5 0.5V6.5H0.5z" fill="#3d4656"/></svg>
<div class="a" style="left:304px;top:341px;width:100px;height:19px;background:linear-gradient(#f2f4f7 0,#f2f4f7 1px,#eceff3 1px,#e8ebf0 50%,#dfe3e9 58%,#d9dde5);border-left:1px solid #f1f3f6;"></div>
<div class="a" style="left:304px;top:360px;width:100px;height:19px;background:linear-gradient(#f2f4f7 0,#f2f4f7 1px,#eceff3 1px,#e8ebf0 50%,#dfe3e9 58%,#d9dde5);border-left:1px solid #f1f3f6;"></div>
<div class="a" style="left:304px;top:379px;width:100px;height:153px;background:linear-gradient(#f2f4f7 0,#f2f4f7 1px,#edf0f4 1px,#e7eaef 50%,#e0e4ea 60%,#e5e8ed);border-left:1px solid #f1f3f6;"></div>
<svg style="left:310px;top:348px" width="7" height="7" viewBox="0 0 7 7"><path d="M6.5 0.5V6.5H0.5z" fill="#3d4656"/></svg>
<span class="t" style="left:323.7px;top:345.69px;font-size:11px;line-height:11px;letter-spacing:-0.181px;color:#2c3a5c;">Odbiorca 3</span>
<svg style="left:310px;top:367px" width="7" height="7" viewBox="0 0 7 7"><path d="M6.5 0.5V6.5H0.5z" fill="#3d4656"/></svg>
<span class="t" style="left:323.7px;top:364.69px;font-size:11px;line-height:11px;letter-spacing:-0.181px;color:#2c3a5c;">Odbiorca 2</span>
<svg style="left:310px;top:386px" width="7" height="7" viewBox="0 0 7 7"><path d="M6.5 0.5V6.5H0.5z" fill="#3d4656"/></svg>
<span class="t" style="left:323.7px;top:383.69px;font-size:11px;line-height:11px;letter-spacing:-0.181px;color:#2c3a5c;">Odbiorca 1</span>
<div class="a" style="left:404px;top:474px;width:100px;height:38px;background:linear-gradient(#f2f4f7 0,#f2f4f7 1px,#ebeef2 1px,#e3e7ec);border-left:1px solid #f1f3f6;"></div>
<div class="a" style="left:404px;top:341px;width:100px;height:19px;background:linear-gradient(#f2f4f7 0,#f2f4f7 1px,#eceff3 1px,#e8ebf0 50%,#dfe3e9 58%,#d9dde5);border-left:1px solid #f1f3f6;"></div>
<svg style="left:410px;top:348px" width="7" height="7" viewBox="0 0 7 7"><path d="M6.5 0.5V6.5H0.5z" fill="#3d4656"/></svg>
<span class="t" style="left:423.6px;top:345.69px;font-size:11px;line-height:11px;letter-spacing:-0.328px;color:#2c3a5c;">Mahoń</span>
<div class="a" style="left:404px;top:360px;width:100px;height:19px;background:linear-gradient(#f2f4f7 0,#f2f4f7 1px,#eceff3 1px,#e8ebf0 50%,#dfe3e9 58%,#d9dde5);border-left:1px solid #f1f3f6;"></div>
<svg style="left:410px;top:367px" width="7" height="7" viewBox="0 0 7 7"><path d="M6.5 0.5V6.5H0.5z" fill="#3d4656"/></svg>
<span class="t" style="left:423.6px;top:364.69px;font-size:11px;line-height:11px;letter-spacing:-0.222px;color:#2c3a5c;">Papier 730</span>
<div class="a" style="left:404px;top:379px;width:100px;height:19px;background:linear-gradient(#f2f4f7 0,#f2f4f7 1px,#eceff3 1px,#e8ebf0 50%,#dfe3e9 58%,#d9dde5);border-left:1px solid #f1f3f6;"></div>
<svg style="left:410px;top:386px" width="7" height="7" viewBox="0 0 7 7"><path d="M6.5 0.5V6.5H0.5z" fill="#3d4656"/></svg>
<span class="t" style="left:423.6px;top:383.69px;font-size:11px;line-height:11px;letter-spacing:0.008px;color:#2c3a5c;">Barwnik Biały...</span>
<div class="a" style="left:404px;top:398px;width:100px;height:19px;background:linear-gradient(#f2f4f7 0,#f2f4f7 1px,#eceff3 1px,#e8ebf0 50%,#dfe3e9 58%,#d9dde5);border-left:1px solid #f1f3f6;"></div>
<svg style="left:410px;top:405px" width="7" height="7" viewBox="0 0 7 7"><path d="M6.5 0.5V6.5H0.5z" fill="#3d4656"/></svg>
<span class="t" style="left:423.6px;top:402.69px;font-size:11px;line-height:11px;letter-spacing:-0.305px;color:#2c3a5c;">Blok kalendarza</span>
<div class="a" style="left:404px;top:417px;width:100px;height:19px;background:linear-gradient(#f2f4f7 0,#f2f4f7 1px,#eceff3 1px,#e8ebf0 50%,#dfe3e9 58%,#d9dde5);border-left:1px solid #f1f3f6;"></div>
<svg style="left:410px;top:424px" width="7" height="7" viewBox="0 0 7 7"><path d="M6.5 0.5V6.5H0.5z" fill="#3d4656"/></svg>
<span class="t" style="left:423.6px;top:421.69px;font-size:11px;line-height:11px;letter-spacing:0.137px;color:#2c3a5c;">Farba do bet...</span>
<div class="a" style="left:404px;top:436px;width:100px;height:19px;background:linear-gradient(#f2f4f7 0,#f2f4f7 1px,#eceff3 1px,#e8ebf0 50%,#dfe3e9 58%,#d9dde5);border-left:1px solid #f1f3f6;"></div>
<svg style="left:410px;top:443px" width="7" height="7" viewBox="0 0 7 7"><path d="M6.5 0.5V6.5H0.5z" fill="#3d4656"/></svg>
<span class="t" style="left:423.6px;top:440.69px;font-size:11px;line-height:11px;letter-spacing:-0.031px;color:#2c3a5c;">Fotel Inka</span>
<div class="a" style="left:404px;top:455px;width:100px;height:19px;background:linear-gradient(#f2f4f7 0,#f2f4f7 1px,#eceff3 1px,#e8ebf0 50%,#dfe3e9 58%,#d9dde5);border-left:1px solid #f1f3f6;"></div>
<svg style="left:410px;top:462px" width="7" height="7" viewBox="0 0 7 7"><path d="M6.5 0.5V6.5H0.5z" fill="#3d4656"/></svg>
<span class="t" style="left:423.6px;top:459.69px;font-size:11px;line-height:11px;letter-spacing:0.033px;color:#2c3a5c;">Pudełko herb...</span>
<svg style="left:410px;top:481px" width="7" height="7" viewBox="0 0 7 7"><path d="M6.5 0.5V6.5H0.5z" fill="#3d4656"/></svg>
<span class="t" style="left:423.6px;top:478.69px;font-size:11px;line-height:11px;letter-spacing:-0.186px;color:#2c3a5c;">Sprężyna</span>
<div class="a" style="left:504px;top:341px;width:100px;height:19px;background:linear-gradient(#f2f4f7 0,#f2f4f7 1px,#eceff3 1px,#e8ebf0 50%,#dfe3e9 58%,#d9dde5);border-left:1px solid #f1f3f6;"></div>
<span class="t" style="left:506px;top:345.69px;font-size:11px;line-height:11px;letter-spacing:-0.102px;color:#2c3a5c;">WZ 00002/PR/2021</span>
<div class="a" style="left:504px;top:360px;width:100px;height:19px;background:linear-gradient(#f2f4f7 0,#f2f4f7 1px,#eceff3 1px,#e8ebf0 50%,#dfe3e9 58%,#d9dde5);border-left:1px solid #f1f3f6;"></div>
<span class="t" style="left:506px;top:364.69px;font-size:11px;line-height:11px;letter-spacing:-0.102px;color:#2c3a5c;">WZ 00001/PR/2021</span>
<div class="a" style="left:504px;top:379px;width:100px;height:19px;background:linear-gradient(#f2f4f7 0,#f2f4f7 1px,#eceff3 1px,#e8ebf0 50%,#dfe3e9 58%,#d9dde5);border-left:1px solid #f1f3f6;"></div>
<span class="t" style="left:506px;top:383.69px;font-size:11px;line-height:11px;letter-spacing:-0.102px;color:#2c3a5c;">WZ 00001/PR/2024</span>
<div class="a" style="left:504px;top:398px;width:100px;height:19px;background:linear-gradient(#f2f4f7 0,#f2f4f7 1px,#eceff3 1px,#e8ebf0 50%,#dfe3e9 58%,#d9dde5);border-left:1px solid #f1f3f6;"></div>
<span class="t" style="left:506px;top:402.69px;font-size:11px;line-height:11px;letter-spacing:-0.102px;color:#2c3a5c;">WZ 00005/PR/2024</span>
<div class="a" style="left:504px;top:417px;width:100px;height:19px;background:linear-gradient(#f2f4f7 0,#f2f4f7 1px,#eceff3 1px,#e8ebf0 50%,#dfe3e9 58%,#d9dde5);border-left:1px solid #f1f3f6;"></div>
<span class="t" style="left:506px;top:421.69px;font-size:11px;line-height:11px;letter-spacing:-0.102px;color:#2c3a5c;">WZ 00001/PR/2024</span>
<div class="a" style="left:504px;top:436px;width:100px;height:19px;background:linear-gradient(#f2f4f7 0,#f2f4f7 1px,#eceff3 1px,#e8ebf0 50%,#dfe3e9 58%,#d9dde5);border-left:1px solid #f1f3f6;"></div>
<span class="t" style="left:506px;top:440.69px;font-size:11px;line-height:11px;letter-spacing:-0.102px;color:#2c3a5c;">WZ 00006/PR/2019</span>
<div class="a" style="left:504px;top:455px;width:100px;height:19px;background:linear-gradient(#f2f4f7 0,#f2f4f7 1px,#eceff3 1px,#e8ebf0 50%,#dfe3e9 58%,#d9dde5);border-left:1px solid #f1f3f6;"></div>
<span class="t" style="left:506px;top:459.69px;font-size:11px;line-height:11px;letter-spacing:-0.102px;color:#2c3a5c;">WZ 00001/PR/2024</span>
<div class="a" style="left:504px;top:474px;width:100px;height:19px;background:linear-gradient(#f2f4f7 0,#f2f4f7 1px,#eceff3 1px,#e8ebf0 50%,#dfe3e9 58%,#d9dde5);border-left:1px solid #f1f3f6;"></div>
<span class="t" style="left:506px;top:478.69px;font-size:11px;line-height:11px;letter-spacing:-0.102px;color:#2c3a5c;">WZ 00002/PR/2024</span>
<div class="a" style="left:504px;top:493px;width:100px;height:19px;background:linear-gradient(#f2f4f7 0,#f2f4f7 1px,#eceff3 1px,#e8ebf0 50%,#dfe3e9 58%,#d9dde5);border-left:1px solid #f1f3f6;"></div>
<span class="t" style="left:506px;top:497.69px;font-size:11px;line-height:11px;letter-spacing:-0.102px;color:#2c3a5c;">WZ 00003/PR/2024</span>
<div class="a" style="left:404px;top:512px;width:200px;height:20px;background:linear-gradient(#f2f4f7 0,#f2f4f7 1px,#eceff3 1px,#e8ebf0 50%,#dfe3e9 58%,#d9dde5);border-left:1px solid #f1f3f6;"></div>
<span class="t" style="left:405px;top:516.69px;font-size:11px;line-height:11px;letter-spacing:-0.239px;color:#2c3a5c;">Podsuma: Sprężyna</span>
<div class="a" style="left:604px;top:341px;width:799px;height:191px;background:#e6e6e7;"></div>
<div class="a" style="left:604px;top:360px;width:799px;height:1px;background:#dde3ee;"></div>
<div class="a" style="left:604px;top:379px;width:799px;height:1px;background:#dde3ee;"></div>
<div class="a" style="left:604px;top:398px;width:799px;height:1px;background:#dde3ee;"></div>
<div class="a" style="left:604px;top:417px;width:799px;height:1px;background:#dde3ee;"></div>
<div class="a" style="left:604px;top:436px;width:799px;height:1px;background:#dde3ee;"></div>
<div class="a" style="left:604px;top:455px;width:799px;height:1px;background:#dde3ee;"></div>
<div class="a" style="left:604px;top:474px;width:799px;height:1px;background:#dde3ee;"></div>
<div class="a" style="left:604px;top:493px;width:799px;height:1px;background:#dde3ee;"></div>
<div class="a" style="left:604px;top:512px;width:799px;height:1px;background:#dde3ee;"></div>
<div class="a" style="left:604px;top:531px;width:799px;height:1px;background:#dde3ee;"></div>
<div class="a" style="left:1303px;top:341px;width:1px;height:191px;background:#dde3ee;"></div>
<span class="t" style="left:1259.62px;top:345.69px;font-size:11px;line-height:11px;color:#1c2438;">- 5,0000</span>
<span class="t" style="left:1384.09px;top:345.69px;font-size:11px;line-height:11px;color:#1c2438;">-50</span>
<span class="t" style="left:1253.52px;top:364.69px;font-size:11px;line-height:11px;color:#1c2438;">- 10,0000</span>
<span class="t" style="left:1374.92px;top:364.69px;font-size:11px;line-height:11px;color:#1c2438;">-34,5</span>
<span class="t" style="left:1259.62px;top:383.69px;font-size:11px;line-height:11px;color:#1c2438;">- 5,0000</span>
<span class="t" style="left:1374.92px;top:383.69px;font-size:11px;line-height:11px;color:#1c2438;">-60,9</span>
<span class="t" style="left:1247.39px;top:402.69px;font-size:11px;line-height:11px;color:#1c2438;">- 100,0000</span>
<span class="t" style="left:1393.88px;top:402.69px;font-size:11px;line-height:11px;color:#1c2438;">0</span>
<span class="t" style="left:1259.62px;top:421.69px;font-size:11px;line-height:11px;color:#1c2438;">- 1,0000</span>
<span class="t" style="left:1368.80px;top:421.69px;font-size:11px;line-height:11px;color:#1c2438;">-12,35</span>
<span class="t" style="left:1259.62px;top:440.69px;font-size:11px;line-height:11px;color:#1c2438;">- 5,0000</span>
<span class="t" style="left:1393.88px;top:440.69px;font-size:11px;line-height:11px;color:#1c2438;">0</span>
<span class="t" style="left:1259.62px;top:459.69px;font-size:11px;line-height:11px;color:#1c2438;">- 3,0000</span>
<span class="t" style="left:1393.88px;top:459.69px;font-size:11px;line-height:11px;color:#1c2438;">0</span>
<span class="t" style="left:1247.39px;top:478.69px;font-size:11px;line-height:11px;color:#1c2438;">- 500,0000</span>
<span class="t" style="left:1393.88px;top:478.69px;font-size:11px;line-height:11px;color:#1c2438;">0</span>
<span class="t" style="left:1235.16px;top:497.69px;font-size:11px;line-height:11px;color:#1c2438;">-10 000,0000</span>
<span class="t" style="left:1384.09px;top:497.69px;font-size:11px;line-height:11px;color:#1c2438;">-17</span>
<span class="t" style="left:1235.16px;top:516.69px;font-size:11px;line-height:11px;color:#1c2438;">-10 500,0000</span>
<span class="t" style="left:1384.09px;top:516.69px;font-size:11px;line-height:11px;color:#1c2438;">-17</span>
<span class="t" style="left:605px;top:326.69px;font-size:11px;line-height:11px;letter-spacing:-0.062px;color:#3b4a6c;">I</span>
<div class="a" style="left:201px;top:537px;width:1206px;height:5px;background:#ffe69f;border:1px solid #9aa7bc;border-top:none;border-radius:0 0 3px 3px;"></div>
<div class="a" style="left:200px;top:542px;width:1208px;height:5px;background:#ffe69f;border:1px solid #9aa7bc;border-top:none;border-radius:0 0 3px 3px;"></div>
<div class="a" style="left:1408px;top:48px;width:6px;height:523px;background:linear-gradient(90deg,#c9d1de,#d3dae6 50%,#c5cddb);"></div>
<div class="a" style="left:1160px;top:191px;width:205px;height:93px;background:#c7d0e8;border:1px solid #8a8f98;box-shadow:inset 0 0 0 2px #f7f7f7,1px 1px 1px rgba(0,0,0,0.12);"></div>
<div class="a" style="left:1163px;top:193px;width:199px;height:21px;background:linear-gradient(#f2f4f8,#e3e7ee);border:1px solid #6a6e76;"></div>
<span class="t" style="left:1168px;top:197.84px;font-size:12px;line-height:12px;letter-spacing:-0.055px;color:#1a1a80;">Lista układów</span>
<span class="t" style="left:1168px;top:219.84px;font-size:12px;line-height:12px;letter-spacing:0.025px;color:#111;">Edytuj definicję układu</span>
<span class="t" style="left:1168px;top:241.64px;font-size:12px;line-height:12px;letter-spacing:-0.531px;color:#111;">Zapisz układ</span>
<span class="t" style="left:1168px;top:263.84px;font-size:12px;line-height:12px;letter-spacing:-0.186px;color:#111;">Zapisz układ jako...</span>
<div class="a" style="left:609px;top:307px;width:625px;height:374px;background:#c6cfde;border:1px solid #1c2232;"></div>
<div class="a" style="left:610px;top:308px;width:623px;height:372px;border-left:1px solid #eef2f7;border-top:1px solid #e6ebf2;"></div>
<div class="a" style="left:610px;top:308px;width:623px;height:29px;background:linear-gradient(#a6b2c9,#b8c2d5 50%,#c4cddd);"></div>
<svg style="left:615px;top:313px" width="24" height="24" viewBox="0 0 24 24"><path d="M8.6 8.6A2.8 2.8 0 1 1 13.4 8.6" stroke="#1ea01e" stroke-width="1.9" fill="none"/><path d="M14.2 10.5A2.8 2.8 0 1 1 17.7 12.5" stroke="#f0c018" stroke-width="1.9" fill="none"/><path d="M4.7 11.7A2.8 2.8 0 1 0 10 13" stroke="#1434d0" stroke-width="1.9" fill="none"/><path d="M10.8 15.5A2.8 2.8 0 1 0 16 15.5" stroke="#e24a10" stroke-width="1.9" fill="none"/></svg>
<span class="t" style="left:639px;top:319.39px;font-size:11px;line-height:11px;letter-spacing:0.209px;color:#111827;">MODUS</span>
<div class="a" style="left:1162px;top:317px;width:31px;height:16px;background:linear-gradient(#dfe7f1,#c9d6e6 45%,#a9bdd6 55%,#c4d3e6);border:1px solid #5e6d86;border-radius:3px;"></div>
<div class="a" style="left:1172px;top:320px;width:11px;height:9px;background:#fff;border:1px solid #3c4656;border-radius:1px;"><div class="a" style="left:2px;top:2px;width:5px;height:3px;border:1px solid #3c4656"></div></div>
<div class="a" style="left:1195px;top:317px;width:31px;height:16px;background:linear-gradient(#eba597,#d9745f 45%,#c0391f 55%,#d06048);border:1px solid #5a1f1f;border-radius:3px;"></div>
<svg style="left:1205px;top:320px" width="13" height="10" viewBox="0 0 13 10"><path d="M2 1.5L11 8.5M11 1.5L2 8.5" stroke="#5a3030" stroke-width="3.6" stroke-linecap="round"/><path d="M2 1.5L11 8.5M11 1.5L2 8.5" stroke="#fff" stroke-width="2" stroke-linecap="round"/></svg>
<div class="a" style="left:617px;top:337px;width:609px;height:337px;background:#bdc8d9;"></div>
<div class="a" style="left:618px;top:341px;width:103px;height:16px;background:#c2ccdc;border:1px solid #96a3b8;"></div>
<span class="t" style="left:623px;top:344.59px;font-size:11px;line-height:11px;letter-spacing:-0.307px;color:#1c2438;">· UKŁADY ANALIZ ·</span>
<div class="a" style="left:623px;top:363px;width:148px;height:19px;background:#fff;border:1px solid #a4b1c6;"></div>
<span class="t" style="left:626px;top:367.09px;font-size:11px;line-height:11px;letter-spacing:-0.278px;color:#111827;">Wszystkie</span>
<svg style="left:757px;top:371px" width="7" height="4" viewBox="0 0 7 4"><path d="M0 0h7l-3.5 4z" fill="#1a1a1a"/></svg>
<div class="a" style="left:649px;top:389px;width:545px;height:245px;background:#fff;"></div>
<div class="a" style="left:649px;top:389px;width:362px;height:22px;background:linear-gradient(#eef0f4,#e2e6ec 55%,#d8dde5);"></div>
<div class="a" style="left:661px;top:389px;width:1px;height:22px;background:#fff;"></div>
<div class="a" style="left:810px;top:389px;width:1px;height:22px;background:#f4f6f9;"></div>
<span class="t" style="left:651px;top:395.88px;font-size:9px;line-height:9px;color:#2a2a2a;">❋</span>
<span class="t" style="left:663.5px;top:395.34px;font-size:12px;line-height:12px;letter-spacing:-0.120px;color:#3b4a6c;">Kod</span>
<span class="t" style="left:813px;top:395.34px;font-size:12px;line-height:12px;letter-spacing:0.078px;color:#3b4a6c;">Opis</span>
<div class="a" style="left:649px;top:411px;width:12px;height:20px;background:#dfe3ea;"></div>
<div class="a" style="left:661px;top:411px;width:350px;height:20px;background:#e9f3e6;"></div>
<svg style="left:652px;top:417px" width="6" height="9" viewBox="0 0 6 9"><circle cx="3" cy="2.5" r="2.2" fill="#1a1a1a"/><rect x="2.3" y="3" width="1.4" height="6" fill="#1a1a1a"/></svg>
<span class="t" style="left:777px;top:416.44px;font-size:12px;line-height:12px;letter-spacing:0.418px;color:#5a5a6a;">kliknij aby dodać filtr</span>
<div class="a" style="left:649px;top:431px;width:362px;height:2px;background:#a9b3c3;"></div>
<div class="a" style="left:649px;top:433px;width:12px;height:40px;background:#dfe3ea;"></div>
<div class="a" style="left:661px;top:433px;width:350px;height:20px;background:#f7f8fa;"></div>
<span class="t" style="left:663.5px;top:437.84px;font-size:12px;line-height:12px;letter-spacing:0.253px;color:#111827;">A-9122024</span>
<div class="a" style="left:661px;top:453px;width:350px;height:20px;background:#fde8aa;border:1px dotted #222;"></div>
<svg style="left:653px;top:460px" width="5" height="8" viewBox="0 0 5 8"><path d="M0 0v8l4.5-4z" fill="#1a1a1a"/></svg>
<span class="t" style="left:663.5px;top:457.84px;font-size:12px;line-height:12px;letter-spacing:0.516px;color:#111827;">moj uklad</span>
<svg style="left:625px;top:395px" width="15" height="16" viewBox="0 0 15 16"><rect x="0.5" y="0.5" width="14" height="15" rx="1.5" fill="#f4f6fa" stroke="#8a96aa"/><rect x="2.5" y="3" width="2.5" height="2.5" fill="#e05040"/><rect x="2.5" y="7" width="2.5" height="2.5" fill="#4a90d8"/><rect x="2.5" y="11" width="2.5" height="2.5" fill="#e8a020"/><path d="M6.5 4h6M6.5 8h6M6.5 12h6" stroke="#5a6880" stroke-width="1"/></svg>
<svg style="left:625px;top:423px" width="15" height="16" viewBox="0 0 15 16"><path d="M1 4l6-3 7 8-6 6H2z" fill="#fafafa" stroke="#808890" stroke-width="0.8"/><path d="M4 12L12 3.5" stroke="#2a6ad0" stroke-width="3"/><path d="M3 13.5l1.2-2.2" stroke="#333" stroke-width="1.2"/></svg>
<svg style="left:626px;top:452px" width="13" height="13" viewBox="0 0 13 13"><path d="M2 2l9 9M11 2l-9 9" stroke="#3c9ad8" stroke-width="3.4" stroke-linecap="round"/></svg>
<svg style="left:622px;top:482px" width="17" height="17" viewBox="0 0 17 17"><rect x="5" y="1.5" width="11" height="12" fill="#eef4fb" stroke="#3a5a8a" stroke-width="0.9"/><path d="M2 0.5h3M3.5 0.5v15M2 15.5h3M5 15.5h11" stroke="#1a2a4a" stroke-width="1"/></svg>
<svg style="left:1203px;top:396px" width="15" height="14" viewBox="0 0 15 14"><circle cx="2.5" cy="2.5" r="1.7" fill="#fff" stroke="#3a78c8" stroke-width="1"/><circle cx="2.5" cy="7.5" r="1.7" fill="#fff" stroke="#3a78c8" stroke-width="1"/><circle cx="2.5" cy="12.5" r="1.7" fill="#fff" stroke="#3a78c8" stroke-width="1"/><path d="M6 2.5h8.5M6 7.5h8.5M6 12.5h8.5" stroke="#1e2430" stroke-width="1"/></svg>
<div class="a" style="left:617px;top:634px;width:609px;height:40px;background:#bdc8d9;border:1px solid #95a2b7;"></div>
<div class="a" style="left:1008px;top:639px;width:100px;height:30px;background:linear-gradient(#f1f3f7,#e0e5ec 50%,#cdd5e1);border:1px solid #d9c890;border-radius:3px;"></div>
<svg style="left:1030px;top:645px" width="15" height="17" viewBox="0 0 15 17"><rect x="0.5" y="0.5" width="11" height="14" fill="#eef4fb" stroke="#3050a0"/><circle cx="6" cy="7" r="3.8" fill="#aad4f4" stroke="#2a6aa8" stroke-width="1.2"/><path d="M8.5 9.5l4 4" stroke="#e08a20" stroke-width="2.2"/></svg>
<span class="t" style="left:1047.5px;top:648.69px;font-size:11px;line-height:11px;letter-spacing:-0.234px;color:#1c2438;">Wybierz</span>
<svg style="left:1137px;top:646px" width="15" height="15" viewBox="0 0 15 15"><circle cx="7.5" cy="7.5" r="7.2" fill="#e8413a"/><path d="M5 5l5 5M10 5l-5 5" stroke="#fff" stroke-width="1.8"/></svg>
<span class="t" style="left:1157px;top:648.69px;font-size:11px;line-height:11px;letter-spacing:-0.096px;color:#1c2438;">Anuluj</span>
<div class="a" style="left:1346px;top:105px;width:20px;height:85px;border:2px solid #e8141c;border-radius:5px;"></div>
<div class="a" style="left:1160px;top:189px;width:120px;height:25px;border:2px solid #e8141c;border-radius:5px;"></div>
<div class="a" style="left:650px;top:454px;width:163px;height:19px;border:2px solid #e8141c;border-radius:5px;"></div>
<div class="a" style="left:1353.7px;top:175.7px;width:30px;height:30px;border-radius:50%;background:radial-gradient(circle at 50% 35%,rgba(232,70,66,0.92),rgba(214,28,28,0.9) 75%);border:2px solid #ff1414;box-shadow:0 1px 3px rgba(0,0,0,0.3);"></div>
<span class="t" style="left:1364.75px;top:183.36px;font-size:16px;line-height:16px;color:#fff;">1</span>
<div class="a" style="left:1285.4px;top:189.4px;width:30px;height:30px;border-radius:50%;background:radial-gradient(circle at 50% 35%,rgba(232,70,66,0.92),rgba(214,28,28,0.9) 75%);border:2px solid #ff1414;box-shadow:0 1px 3px rgba(0,0,0,0.3);"></div>
<span class="t" style="left:1296.45px;top:197.06px;font-size:16px;line-height:16px;color:#fff;">2</span>
<div class="a" style="left:830.6px;top:446.7px;width:30px;height:30px;border-radius:50%;background:radial-gradient(circle at 50% 35%,rgba(232,70,66,0.92),rgba(214,28,28,0.9) 75%);border:2px solid #ff1414;box-shadow:0 1px 3px rgba(0,0,0,0.3);"></div>
<span class="t" style="left:841.65px;top:454.36px;font-size:16px;line-height:16px;color:#fff;">3</span>
</body></html>
